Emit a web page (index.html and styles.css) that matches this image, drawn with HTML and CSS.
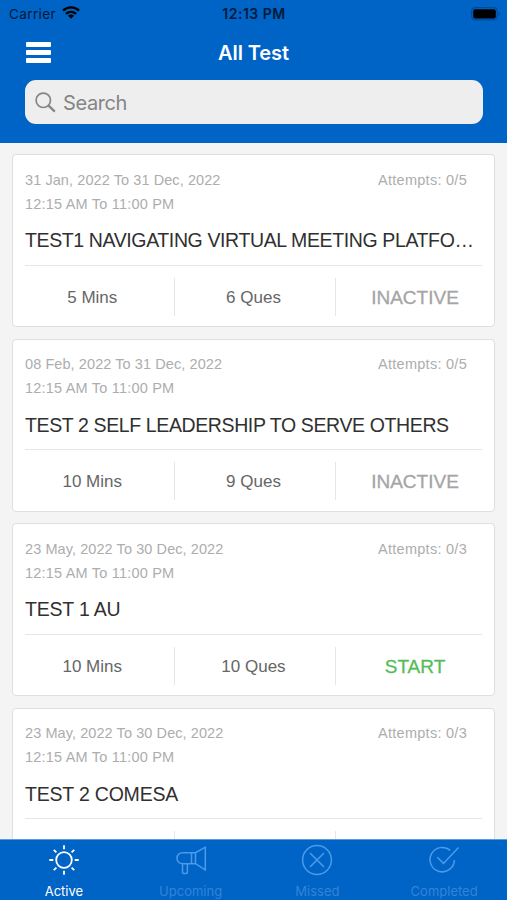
FILE: index.html
```html
<!DOCTYPE html>
<html lang="en">
<head>
<meta charset="utf-8">
<meta name="viewport" content="width=device-width, initial-scale=1">
<title>All Test</title>
<link rel="stylesheet" href="styles.css">
</head>
<body>
<div class="app">
  <header class="header">
    <div class="status">
      <div class="carrier"><span>Carrier</span>
        <svg class="wifi" width="18" height="13" viewBox="0 0 18 13" fill="none" stroke="currentColor" stroke-width="2.4"><path d="M1 4.7a11.3 11.3 0 0 1 16 0"/><path d="M4 7.9a7.1 7.1 0 0 1 10 0"/><path d="M9 12.8 6 9.8a4.2 4.2 0 0 1 6 0z" fill="currentColor" stroke="none"/></svg>
      </div>
      <div class="clock">12:13 PM</div>
      <svg class="battery" width="30" height="14" viewBox="0 0 30 14"><rect x=".7" y=".7" width="25.6" height="12.2" rx="3.6" fill="none" stroke="#004a9a" stroke-width="1.2"/><rect x="2.2" y="2.2" width="22.6" height="9.2" rx="2" fill="#000"/><path d="M27.6 4.8c1.6.7 1.6 3.3 0 4z" fill="#004a9a"/></svg>
    </div>
    <div class="navbar">
      <div class="menu"><i></i><i></i><i></i></div>
      <h1>All Test</h1>
      <span></span>
    </div>
    <div class="search">
      <svg width="21" height="21" viewBox="0 0 21 21" fill="none" stroke="#858585"><circle cx="8.3" cy="8.3" r="7.2" stroke-width="1.7"/><path d="m13.6 13.6 6.2 6" stroke-width="2.3"/></svg>
      <span>Search</span>
    </div>
  </header>

  <main class="list">
    <article class="card">
      <div class="meta"><span>31 Jan, 2022 To 31 Dec, 2022</span><span class="attempts">Attempts: 0/5</span></div>
      <div class="time">12:15 AM To 11:00 PM</div>
      <h2 class="long">TEST1 NAVIGATING VIRTUAL MEETING PLATFO…</h2>
      <div class="facts"><span>5 Mins</span><span>6 Ques</span><span class="action">INACTIVE</span></div>
    </article>
    <article class="card">
      <div class="meta"><span>08 Feb, 2022 To 31 Dec, 2022</span><span class="attempts">Attempts: 0/5</span></div>
      <div class="time">12:15 AM To 11:00 PM</div>
      <h2 class="long">TEST 2 SELF LEADERSHIP TO SERVE OTHERS</h2>
      <div class="facts"><span>10 Mins</span><span>9 Ques</span><span class="action">INACTIVE</span></div>
    </article>
    <article class="card">
      <div class="meta"><span>23 May, 2022 To 30 Dec, 2022</span><span class="attempts">Attempts: 0/3</span></div>
      <div class="time">12:15 AM To 11:00 PM</div>
      <h2>TEST 1 AU</h2>
      <div class="facts"><span>10 Mins</span><span>10 Ques</span><span class="action start">START</span></div>
    </article>
    <article class="card">
      <div class="meta"><span>23 May, 2022 To 30 Dec, 2022</span><span class="attempts">Attempts: 0/3</span></div>
      <div class="time">12:15 AM To 11:00 PM</div>
      <h2>TEST 2 COMESA</h2>
      <div class="facts"><span></span><span></span><span></span></div>
    </article>
  </main>

  <nav class="tabs">
    <div class="tab active">
      <svg width="32" height="32" viewBox="0 0 32 32"><circle cx="16" cy="16" r="7.8"/><path d="M16 1.300v4M16 26.700v4M1.300 16h4M26.700 16h4M5.800 5.800l2.600 2.600M23.600 23.600l2.600 2.600M5.800 26.200l2.600-2.600M23.600 8.400l2.600-2.600"/></svg>
      <span>Active</span>
    </div>
    <div class="tab">
      <svg width="32" height="32" viewBox="0 0 32 32"><path d="M20.500 8.700H8C4.500 8.700 2 10.800 2 14.200S4.500 19.700 8 19.700h12.500L30.300 26V3.200zM20.500 8.700v11M16.500 8.700v11M7.500 19.700v8.500c0 .8.500 1.200 1.200 1.200h2.500c.7 0 1.200-.4 1.200-1.200v-8.500"/></svg>
      <span>Upcoming</span>
    </div>
    <div class="tab">
      <svg width="32" height="32" viewBox="0 0 32 32"><circle cx="16" cy="16" r="14.400"/><path d="m9 9 14 14M23 9 9 23"/></svg>
      <span>Missed</span>
    </div>
    <div class="tab">
      <svg width="32" height="32" viewBox="0 0 32 32"><path d="M22.300 6.500a12.200 12.200 0 1 0 4.100 9.500M9.300 13.200l6.200 6.200L30.500 3.600"/></svg>
      <span>Completed</span>
    </div>
  </nav>
</div>
</body>
</html>
```
FILE: styles.css
```css
* { box-sizing: border-box; }

body {
  margin: 0;
  background: #f4f4f4;
  font-family: "Liberation Sans", Arial, sans-serif;
}

.app {
  width: 507px;
  height: 900px;
  display: flex;
  flex-direction: column;
  overflow: hidden;
}

.header {
  height: 142.5px;
  flex: none;
  padding: 0 25px;
  background: #0063c6;
}

.status {
  height: 28px;
  margin: 0 -17px 0 -16px;
  display: grid;
  grid-template-columns: 1fr auto 1fr;
  align-items: center;
  color: #001a38;
  font-family: Inter, sans-serif;
}

.carrier {
  display: flex;
  align-items: center;
  gap: 6px;
  font-size: 13.6px;
  letter-spacing: .35px;
}

.wifi { color: #000; margin-top: -3px; }

.clock {
  margin-top: -1px;
  font-weight: 600;
  font-size: 14px;
  letter-spacing: .5px;
}

.battery { justify-self: end; margin: -1px -2px 0 0; }

.navbar {
  height: 52px;
  display: grid;
  grid-template-columns: 1fr auto 1fr;
  align-items: center;
}

.menu {
  display: grid;
  gap: 3.5px;
  width: 25px;
  margin: -3px 0 0 1px;
}

.menu i { height: 4.7px; background: #fff; border-radius: 1px; }

.navbar h1 {
  margin: -3px 0 0;
  color: #fff;
  font: 600 20px/26px Inter, sans-serif;
  letter-spacing: -.1px;
}

.search {
  height: 44px;
  margin-right: -.5px;
  display: flex;
  align-items: center;
  gap: 7px;
  padding-left: 10px;
  border-radius: 11px;
  background: #eee;
  color: #858585;
  font: 20px/24px Inter, sans-serif;
  letter-spacing: -.4px;
}

.search span { padding-top: 1px; }

.list {
  flex: 1;
  min-height: 0;
  overflow: hidden;
  display: flex;
  flex-direction: column;
  gap: 11.5px;
  padding: 11.5px 12px 0;
}

.card {
  flex: none;
  height: 173px;
  padding: 14px 12px 0;
  background: #fff;
  border: 1px solid #dfdfdf;
  border-radius: 4px;
}

.meta {
  display: flex;
  justify-content: space-between;
  padding-right: 15px;
}

.meta, .time {
  height: 24.5px;
  color: #adadad;
  font-size: 14.5px;
  line-height: 20px;
  letter-spacing: .08px;
}

.meta { position: relative; top: .5px; }
.time { letter-spacing: .2px; }
.attempts { letter-spacing: .27px; }

.card h2 {
  margin: 8px 0 0;
  height: 39.5px;
  border-bottom: 1px solid #e6e6e6;
  color: #303030;
  font-size: 19.5px;
  font-weight: 400;
  line-height: 28px;
  letter-spacing: -.2px;
  white-space: nowrap;
}

.card h2.long { letter-spacing: -.38px; }

.facts {
  height: 38px;
  margin-top: 12px;
  display: grid;
  grid-template-rows: 38px;
  grid-template-columns: 148.5px 161px 160px;
  color: #666;
  font-size: 17px;
  line-height: 39px;
  text-align: center;
}

.facts span + span { border-left: 1px solid #e6e6e6; }
.facts span:first-child { padding-right: 14px; }
.facts span:nth-child(2) { padding-right: 2px; }

.facts .action {
  color: #a5a5a5;
  font-size: 19px;
  -webkit-text-stroke: .3px currentColor;
}

.facts .start { color: #55bd58; }

.tabs {
  flex: none;
  height: 61.5px;
  display: grid;
  grid-template-columns: repeat(4, 1fr);
  background: #0063c6;
  border-top: 1px solid #5b9bdb;
}

.tab {
  display: flex;
  flex-direction: column;
  align-items: center;
  gap: 6px;
  padding: 4.5px 0 0 1px;
  color: #4b9be9;
  font: 13px/18px Inter, sans-serif;
}

.tab span { color: #3384d8; }

.tab svg {
  fill: none;
  stroke: currentColor;
  stroke-width: 1.5;
}

.tab.active, .tab.active span { color: #fff; }
.tab.active svg { stroke-width: 1.8; }
```
